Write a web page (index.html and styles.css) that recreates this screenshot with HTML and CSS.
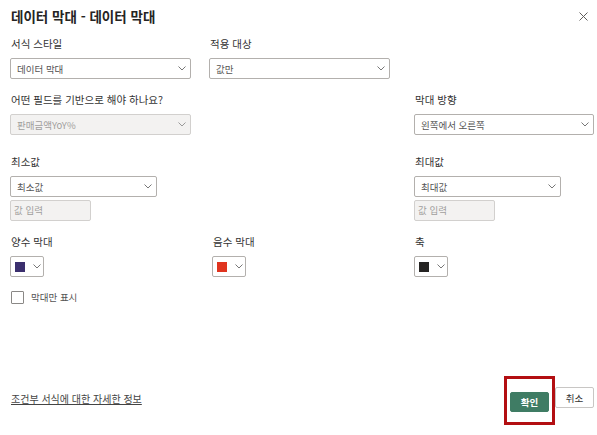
FILE: index.html
```html
<!DOCTYPE html>
<html lang="ko">
<head>
  <meta charset="UTF-8" />
  <meta name="viewport" content="width=device-width, initial-scale=1.0"/>
  <title>데이터 막대</title>
  <link rel="stylesheet" href="styles.css">
</head>
<body>
  <div class="dialog">
    <div class="header">
      <h2 class="title">데이터 막대 - 데이터 막대</h2>
      <button class="close" aria-label="닫기">
        <svg width="9" height="9" viewBox="0 0 9 9"><path d="M0.5 0.5 L8.5 8.5 M8.5 0.5 L0.5 8.5" stroke="#605e5c" stroke-width="1" fill="none"/></svg>
      </button>
    </div>

    <div class="row row-top">
      <div class="field w181">
        <label>서식 스타일</label>
        <div class="select"><span>데이터 막대</span><svg class="chev" width="8" height="5" viewBox="0 0 8 5"><path d="M0.5 0.5 L4 4 L7.5 0.5" stroke="#777" fill="none"/></svg></div>
      </div>
      <div class="field w181">
        <label>적용 대상</label>
        <div class="select"><span>값만</span><svg class="chev" width="8" height="5" viewBox="0 0 8 5"><path d="M0.5 0.5 L4 4 L7.5 0.5" stroke="#777" fill="none"/></svg></div>
      </div>
    </div>

    <div class="row row-split gap14">
      <div class="field w181">
        <label>어떤 필드를 기반으로 해야 하나요?</label>
        <div class="select disabled"><span>판매금액YoY%</span><svg class="chev" width="8" height="5" viewBox="0 0 8 5"><path d="M0.5 0.5 L4 4 L7.5 0.5" stroke="#999" fill="none"/></svg></div>
      </div>
      <div class="field w181 right">
        <label>막대 방향</label>
        <div class="select"><span>왼쪽에서 오른쪽</span><svg class="chev" width="8" height="5" viewBox="0 0 8 5"><path d="M0.5 0.5 L4 4 L7.5 0.5" stroke="#777" fill="none"/></svg></div>
      </div>
    </div>

    <div class="row row-split gap20">
      <div class="field w147">
        <label>최소값</label>
        <div class="select"><span>최소값</span><svg class="chev" width="8" height="5" viewBox="0 0 8 5"><path d="M0.5 0.5 L4 4 L7.5 0.5" stroke="#777" fill="none"/></svg></div>
        <div class="input">값 입력</div>
      </div>
      <div class="field w147 right">
        <label>최대값</label>
        <div class="select"><span>최대값</span><svg class="chev" width="8" height="5" viewBox="0 0 8 5"><path d="M0.5 0.5 L4 4 L7.5 0.5" stroke="#777" fill="none"/></svg></div>
        <div class="input">값 입력</div>
      </div>
    </div>

    <div class="row row-colors gap14">
      <div class="field">
        <label>양수 막대</label>
        <div class="picker"><span class="swatch purple"></span><svg class="chev" width="8" height="5" viewBox="0 0 8 5"><path d="M0.5 0.5 L4 4 L7.5 0.5" stroke="#777" fill="none"/></svg></div>
      </div>
      <div class="field">
        <label>음수 막대</label>
        <div class="picker"><span class="swatch red"></span><svg class="chev" width="8" height="5" viewBox="0 0 8 5"><path d="M0.5 0.5 L4 4 L7.5 0.5" stroke="#777" fill="none"/></svg></div>
      </div>
      <div class="field">
        <label>축</label>
        <div class="picker"><span class="swatch black"></span><svg class="chev" width="8" height="5" viewBox="0 0 8 5"><path d="M0.5 0.5 L4 4 L7.5 0.5" stroke="#777" fill="none"/></svg></div>
      </div>
    </div>

    <div class="check">
      <span class="box"></span>
      <span>막대만 표시</span>
    </div>

    <div class="footer">
      <a class="link" href="#">조건부 서식에 대한 자세한 정보</a>
      <div class="actions">
        <div class="ok-wrap">
          <button class="btn ok">확인</button>
          <span class="highlight"></span>
        </div>
        <button class="btn cancel">취소</button>
      </div>
    </div>
  </div>
</body>
</html>
```

FILE: styles.css
```css
body {
  margin: 0;
  background: #fff;
  font-family: "Noto Sans CJK KR", "Noto Sans", sans-serif;
  color: #252423;
}
.dialog {
  width: 597px;
  height: 435px;
  box-sizing: border-box;
  padding: 0 3px 27px 10px;
  display: flex;
  flex-direction: column;
}
.header {
  display: flex;
  align-items: center;
  justify-content: space-between;
  padding-top: 7px;
  height: 18px;
}
.title {
  margin: 0 0 0 1px;
  font-size: 13.5px;
  line-height: 18px;
  font-weight: 700;
}
.close {
  border: none;
  background: none;
  padding: 0;
  margin-right: 6px;
  width: 9px;
  height: 9px;
  display: flex;
}
.row {
  display: flex;
}
.row-top {
  margin-top: 12px;
  gap: 18px;
}
.row-split {
  justify-content: space-between;
}
.row-colors {
  display: grid;
  grid-template-columns: 202px 202px 1fr;
}
.gap14 { margin-top: 14px; }
.gap20 { margin-top: 20px; }
.field {
  display: flex;
  flex-direction: column;
}
.field label {
  font-size: 10.5px;
  line-height: 14px;
  margin: 0 0 7px 1px;
  color: #333;
}
.w181 { width: 181px; }
.w147 { width: 147px; }
.right { margin-right: 33px; }
.row-split .w181.right { margin-right: 0; width: 180px; }
.row-split .w147.right { width: 147px; margin-right: 33px; }
.select {
  height: 21px;
  box-sizing: border-box;
  border: 1px solid #b3b0ad;
  border-radius: 2px;
  display: flex;
  align-items: center;
  justify-content: space-between;
  padding: 0 4px 0 6px;
  font-size: 9.5px;
  color: #555;
}
.select.disabled {
  background: #f3f2f1;
  border-color: #d2d0ce;
  color: #a19f9d;
}
.input {
  margin-top: 3px;
  width: 81px;
  height: 21px;
  box-sizing: border-box;
  border: 1px solid #d2d0ce;
  border-radius: 2px;
  background: #f3f2f1;
  color: #a19f9d;
  font-size: 9.5px;
  line-height: 19px;
  padding-left: 3px;
}
.picker {
  width: 34px;
  height: 21px;
  box-sizing: border-box;
  border: 1px solid #b3b0ad;
  border-radius: 2px;
  display: flex;
  align-items: center;
  gap: 8px;
  padding-left: 4px;
}
.swatch {
  width: 10px;
  height: 10px;
}
.purple { background: #3b2f6e; }
.red { background: #e0341f; }
.black { background: #252423; }
.check {
  margin-top: 13px;
  display: flex;
  align-items: center;
  gap: 7px;
  font-size: 9.5px;
  color: #555;
}
.box {
  width: 13px;
  height: 13px;
  box-sizing: border-box;
  border: 1px solid #8a8886;
  border-radius: 1px;
  margin-left: 1px;
}
.footer {
  margin-top: auto;
  display: flex;
  align-items: center;
  justify-content: space-between;
}
.link {
  font-size: 10px;
  color: #444;
  text-decoration: underline;
  margin-left: 1px;
  margin-top: 2px;
}
.actions {
  display: flex;
  gap: 6px;
}
.ok-wrap {
  position: relative;
  height: 20px;
}
.btn {
  width: 39px;
  height: 20px;
  box-sizing: border-box;
  border-radius: 2px;
  font-family: inherit;
  font-size: 9.5px;
  padding: 0;
  cursor: pointer;
}
.ok {
  background: #3f7c64;
  color: #fff;
  border: 1px solid #3f7c64;
  font-weight: 700;
}
.cancel {
  background: #fff;
  color: #333;
  border: 1px solid #c8c6c4;
  height: 21px;
}
.highlight {
  position: absolute;
  left: -6px;
  top: -11px;
  width: 51px;
  height: 49px;
  box-sizing: border-box;
  border: 3px solid #b30f12;
}
```
